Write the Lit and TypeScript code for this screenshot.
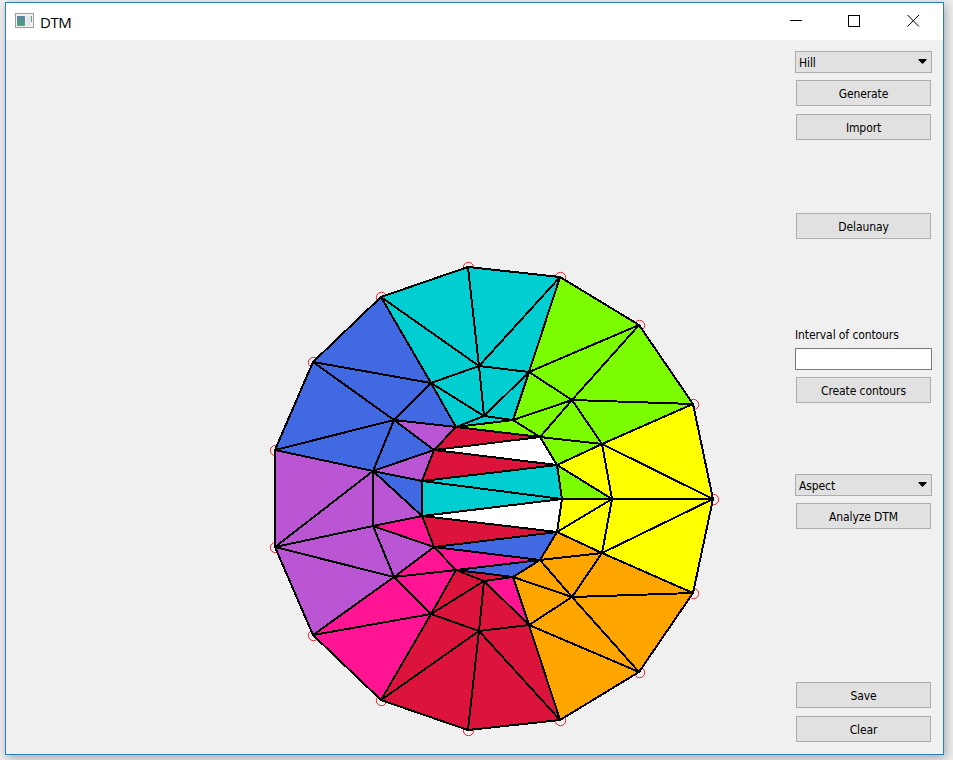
import { LitElement, html, css, svg } from "lit";
import { customElement, property } from "lit/decorators.js";

type Point = [number, number];

// Rings of survey points, counter-clockwise from the east, outermost first.
const rings: Record<string, Point[]> = {
  O: [[713, 499], [693, 404], [639, 325], [560, 277], [468, 267], [381, 297], [313, 362], [275, 450],
      [275, 547], [313, 635], [381, 700], [468, 730], [560, 720], [639, 672], [693, 593]],
  M: [[612, 499], [602, 444], [572, 400], [529, 372], [479, 366], [431, 383], [394, 420], [373, 471],
      [373, 526], [394, 577], [431, 614], [479, 631], [529, 625], [572, 597], [602, 553]],
  I: [[562, 499], [557, 465], [540, 437], [513, 420], [484, 416], [456, 427], [434, 450], [422, 481],
      [422, 516], [434, 547], [456, 570], [484, 581], [513, 577], [540, 560], [557, 532]],
};

// Triangles grouped by slope aspect.
const aspects: Record<string, string[]> = {
  yellow: ["O0 O1 M1", "O0 M1 M0", "O14 O0 M14", "O0 M14 M0", "M0 M1 I1", "M14 M0 I14", "M0 I14 I0"],
  green: ["O1 O2 M2", "O1 M1 M2", "O2 M2 M3", "O2 O3 M3", "M0 I0 I1", "M1 I1 I2", "M1 M2 I2",
          "M2 I2 I3", "M2 M3 I3", "I5 I3 I2"],
  cyan: ["O3 M3 M4", "O3 O4 M4", "O4 O5 M4", "O5 M4 M5", "M3 I3 I4", "M3 M4 I4", "M4 M5 I4",
         "M5 I4 I5", "I3 I4 I5", "I7 I1 I0", "I7 I0 I8"],
  blue: ["O5 O6 M5", "O6 M5 M6", "O6 O7 M6", "O7 M6 M7", "M5 M6 I5", "M6 M7 I6", "M7 I7 I8",
         "I9 I14 I13", "I10 I13 I12"],
  purple: ["O7 O8 M7", "O8 M7 M8", "O8 M8 M9", "O8 O9 M9", "M6 I5 I6", "M7 I6 I7", "M7 M8 I8", "M8 M9 I9"],
  pink: ["O9 M9 M10", "O9 O10 M10", "M8 I8 I9", "M9 I9 I10", "M9 M10 I10", "M12 I11 I12", "I9 I13 I10"],
  red: ["O10 M10 M11", "O10 O11 M11", "O11 O12 M11", "O12 M11 M12", "M10 I10 I11", "M10 M11 I11",
        "M11 M12 I11", "I5 I2 I6", "I6 I1 I7", "I8 I14 I9", "I10 I12 I11"],
  orange: ["O12 O13 M12", "O13 M12 M13", "O13 O14 M13", "O14 M13 M14", "M12 M13 I12", "M13 I12 I13",
           "M13 M14 I13", "M14 I13 I14"],
  flat: ["I6 I2 I1", "I8 I0 I14"],
};

const corners = (t: string) =>
  t.split(" ").map((n) => rings[n[0]][Number(n.slice(1))].join(",")).join(" ");

@customElement("terrain-canvas")
class TerrainCanvas extends LitElement {
  static styles = css`
    :host { display: block; flex: 1; min-width: 0; }
    svg { display: block; width: 100%; height: 100%; shape-rendering: crispEdges; }
    .point { fill: none; stroke: #e8202c; stroke-width: 1; shape-rendering: auto; }
    .tri { stroke: #000; stroke-width: 2; stroke-linejoin: round; }
    .yellow { fill: #ffff00; }
    .green { fill: #7cfc00; }
    .cyan { fill: #00ced1; }
    .blue { fill: #4169e1; }
    .purple { fill: #ba55d3; }
    .pink { fill: #ff1493; }
    .red { fill: #dc143c; }
    .orange { fill: #ffa500; }
    .flat { fill: #ffffff; }
  `;

  render() {
    return html`<svg viewBox="6 40 789 714" preserveAspectRatio="xMinYMin meet">
      ${rings.O.map(([x, y]) => svg`<circle class="point" cx=${x + 0.5} cy=${y + 0.5} r="5.2"></circle>`)}
      ${Object.entries(aspects).map(([name, list]) =>
        list.map((t) => svg`<polygon class="tri ${name}" points=${corners(t)}></polygon>`))}
    </svg>`;
  }
}

@customElement("push-button")
class PushButton extends LitElement {
  static styles = css`
    :host { display: block; margin: 0 1px; height: 26px; }
    .btn {
      box-sizing: border-box; width: 100%; height: 26px; padding: 1px 0 0; margin: 0;
      border: 1px solid #adadad; border-radius: 0; background: #e1e1e1; color: #000;
      font: inherit; letter-spacing: inherit; line-height: 22px; display: block; text-align: center;
    }
  `;
  @property() label = "";
  render() {
    return html`<button class="btn">${this.label}</button>`;
  }
}

@customElement("combo-box")
class ComboBox extends LitElement {
  static styles = css`
    :host {
      box-sizing: border-box; display: flex; justify-content: space-between; align-items: center;
      height: 22px; padding: 1px 4px 0 3px; border: 1px solid #adadad; background: #e1e1e1;
    }
    .arrow { display: block; width: 9px; height: 5px; margin-top: -2px; }
  `;
  @property() value = "";
  render() {
    return html`<span>${this.value}</span>
      <svg class="arrow" viewBox="0 0 9 5"><path d="M.5 0h8v1L4.5 5 .5 1z"></path></svg>`;
  }
}

@customElement("app-root")
class AppRoot extends LitElement {
  static styles = css`
    :host {
      display: block; box-sizing: border-box; width: 953px; height: 760px; padding: 2px 9px 5px 5px;
      background: #ececec; overflow: hidden;
    }
    .window {
      box-sizing: border-box; width: 939px; height: 753px; border: 1px solid #2a80bd;
      background: #f0f0f0; display: flex; flex-direction: column;
      box-shadow: 2px 3px 9px rgba(0, 0, 0, 0.28);
    }
    .title {
      height: 37px; background: #fff; display: flex; align-items: center; flex: none;
      font: 15px/20px "Open Sans", "Noto Sans", sans-serif; color: #000;
    }
    .logo { width: 19px; height: 15px; margin: 0 6px 2px 9px; }
    .name { flex: 1; letter-spacing: -0.5px; }
    .controls { width: 130px; height: 13px; margin: 0 23px 2px 0; fill: none; stroke: #000; }
    .client { flex: 1; display: flex; min-height: 0; }
    .side {
      width: 137px; margin-right: 11px; padding-top: 11px; flex: none; display: flex; flex-direction: column;
      font: 12px/20px "DejaVu Sans Condensed", "DejaVu Sans", sans-serif; color: #000;
      letter-spacing: -0.1px;
    }
    .group { display: flex; flex-direction: column; }
    .tight { gap: 7px; }
    .tight push-button + push-button { margin-top: 1px; }
    .delaunay { margin-top: 73px; }
    .contours { margin-top: 86px; }
    .label { height: 20px; margin-bottom: 3px; white-space: nowrap; }
    .entry {
      box-sizing: border-box; width: 137px; height: 22px; margin: 0 0 7px; padding: 0 3px;
      border: 1px solid #7a7a7a; border-radius: 0; background: #fff; font: inherit;
    }
    .analysis { margin-top: 71px; }
    .file { margin-top: 153px; }
  `;

  render() {
    return html`<div class="window">
      <div class="title">
        <svg class="logo" viewBox="0 0 19 15">
          <defs><linearGradient id="g" x2="0" y2="1">
            <stop offset="0" stop-color="#5d83a0"></stop><stop offset="1" stop-color="#4ba37e"></stop>
          </linearGradient></defs>
          <rect x=".5" y=".5" width="18" height="14" fill="#f4f4f6" stroke="#9a9c9f"></rect>
          <rect x="2" y="3" width="8" height="10" fill="url(#g)"></rect>
          <rect x="11" y="3" width="5" height="10" fill="#e3e5e9"></rect>
          <rect x="16" y="3" width="1" height="6" fill="#6b9a93"></rect>
        </svg>
        <span class="name">DTM</span>
        <svg class="controls" viewBox="0 0 130 13">
          <path d="M0 6.5h12M58.5 1.5h11v11h-11z" shape-rendering="crispEdges"></path>
          <path d="M117.5 1l11.5 11.5M129 1l-11.5 11.5"></path>
        </svg>
      </div>
      <div class="client">
        <terrain-canvas></terrain-canvas>
        <div class="side">
          <div class="group tight">
            <combo-box value="Hill"></combo-box>
            <push-button label="Generate"></push-button>
            <push-button label="Import"></push-button>
          </div>
          <div class="group delaunay"><push-button label="Delaunay"></push-button></div>
          <div class="group contours">
            <label class="label" for="interval">Interval of contours</label>
            <input class="entry" id="interval" />
            <push-button label="Create contours"></push-button>
          </div>
          <div class="group tight analysis">
            <combo-box value="Aspect"></combo-box>
            <push-button label="Analyze DTM"></push-button>
          </div>
          <div class="group tight file">
            <push-button label="Save"></push-button>
            <push-button label="Clear"></push-button>
          </div>
        </div>
      </div>
    </div>`;
  }
}
